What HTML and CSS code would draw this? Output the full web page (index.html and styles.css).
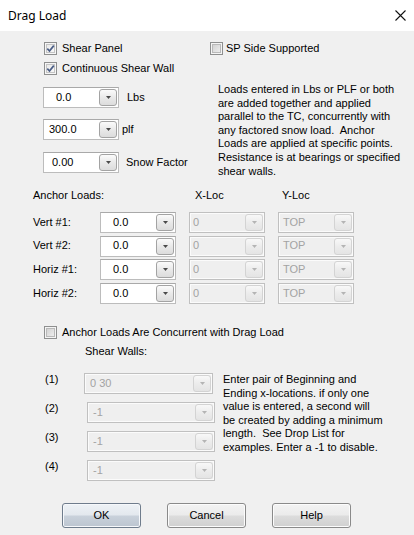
FILE: index.html
```html
<!DOCTYPE html>
<html>
<head>
<meta charset="utf-8">
<link rel="stylesheet" href="styles.css">
</head>
<body>
<div class="window">
  <div class="titlebar">
    <span class="title">Drag Load</span>
    <svg class="close" width="11" height="11" viewBox="0 0 11 11"><path d="M0.5 0.5 L10.5 10.5 M10.5 0.5 L0.5 10.5" stroke="#111" stroke-width="1.1" fill="none"/></svg>
  </div>

  <div class="top">
    <div class="top-left">
      <div class="check check--first"><span class="box box--on"><svg width="9" height="9" viewBox="0 0 9 9"><path d="M1.3 4.6 L3.5 7 L7.8 1.6" stroke="#4b5e86" stroke-width="1.7" fill="none"/></svg></span><span>Shear Panel</span></div>
      <div class="check check--second"><span class="box box--on"><svg width="9" height="9" viewBox="0 0 9 9"><path d="M1.3 4.6 L3.5 7 L7.8 1.6" stroke="#4b5e86" stroke-width="1.7" fill="none"/></svg></span><span>Continuous Shear Wall</span></div>

      <div class="field-row field-row--lbs">
        <div class="combo combo--w76"><span class="val pad-12">0.0</span><span class="drop"><svg width="5" height="3" viewBox="0 0 5 3"><path d="M0 0 H5 L2.5 3 Z" fill="#4a4a4a"/></svg></span></div>
        <span class="unit unit--lbs">Lbs</span>
      </div>
      <div class="field-row field-row--plf">
        <div class="combo combo--w76"><span class="val pad-5">300.0</span><span class="drop"><svg width="5" height="3" viewBox="0 0 5 3"><path d="M0 0 H5 L2.5 3 Z" fill="#4a4a4a"/></svg></span></div>
        <span class="unit unit--plf">plf</span>
      </div>
      <div class="field-row field-row--snow">
        <div class="combo combo--w76"><span class="val pad-8">0.00</span><span class="drop"><svg width="5" height="3" viewBox="0 0 5 3"><path d="M0 0 H5 L2.5 3 Z" fill="#4a4a4a"/></svg></span></div>
        <span class="unit unit--snow">Snow Factor</span>
      </div>
    </div>

    <div class="top-right">
      <div class="check check--sp"><span class="box box--off"></span><span>SP Side Supported</span></div>
      <p class="note note--top">Loads entered in Lbs or PLF or both<br>are added together and applied<br>parallel to the TC, concurrently with<br>any factored snow load.&nbsp; Anchor<br>Loads are applied at specific points.<br>Resistance is at bearings or specified<br>shear walls.</p>
    </div>
  </div>

  <div class="anchor">
    <div class="anchor-head">
      <span class="head-cell">Anchor Loads:</span>
      <span></span>
      <span class="head-cell head-x">X-Loc</span>
      <span class="head-cell head-y">Y-Loc</span>
    </div>
    <div class="anchor-grid">
      <span class="row-label">Vert #1:</span>
      <div class="combo"><span class="val pad-12">0.0</span><span class="drop"><svg width="5" height="3" viewBox="0 0 5 3"><path d="M0 0 H5 L2.5 3 Z" fill="#4a4a4a"/></svg></span></div>
      <div class="combo combo--off"><span class="val pad-3">0</span><span class="drop"><svg width="5" height="3" viewBox="0 0 5 3"><path d="M0 0 H5 L2.5 3 Z" fill="#b4b4b4"/></svg></span></div>
      <div class="combo combo--off"><span class="val pad-4">TOP</span><span class="drop"><svg width="5" height="3" viewBox="0 0 5 3"><path d="M0 0 H5 L2.5 3 Z" fill="#b4b4b4"/></svg></span></div>

      <span class="row-label">Vert #2:</span>
      <div class="combo"><span class="val pad-12">0.0</span><span class="drop"><svg width="5" height="3" viewBox="0 0 5 3"><path d="M0 0 H5 L2.5 3 Z" fill="#4a4a4a"/></svg></span></div>
      <div class="combo combo--off"><span class="val pad-3">0</span><span class="drop"><svg width="5" height="3" viewBox="0 0 5 3"><path d="M0 0 H5 L2.5 3 Z" fill="#b4b4b4"/></svg></span></div>
      <div class="combo combo--off"><span class="val pad-4">TOP</span><span class="drop"><svg width="5" height="3" viewBox="0 0 5 3"><path d="M0 0 H5 L2.5 3 Z" fill="#b4b4b4"/></svg></span></div>

      <span class="row-label">Horiz #1:</span>
      <div class="combo"><span class="val pad-12">0.0</span><span class="drop"><svg width="5" height="3" viewBox="0 0 5 3"><path d="M0 0 H5 L2.5 3 Z" fill="#4a4a4a"/></svg></span></div>
      <div class="combo combo--off"><span class="val pad-3">0</span><span class="drop"><svg width="5" height="3" viewBox="0 0 5 3"><path d="M0 0 H5 L2.5 3 Z" fill="#b4b4b4"/></svg></span></div>
      <div class="combo combo--off"><span class="val pad-4">TOP</span><span class="drop"><svg width="5" height="3" viewBox="0 0 5 3"><path d="M0 0 H5 L2.5 3 Z" fill="#b4b4b4"/></svg></span></div>

      <span class="row-label">Horiz #2:</span>
      <div class="combo"><span class="val pad-12">0.0</span><span class="drop"><svg width="5" height="3" viewBox="0 0 5 3"><path d="M0 0 H5 L2.5 3 Z" fill="#4a4a4a"/></svg></span></div>
      <div class="combo combo--off"><span class="val pad-3">0</span><span class="drop"><svg width="5" height="3" viewBox="0 0 5 3"><path d="M0 0 H5 L2.5 3 Z" fill="#b4b4b4"/></svg></span></div>
      <div class="combo combo--off"><span class="val pad-4">TOP</span><span class="drop"><svg width="5" height="3" viewBox="0 0 5 3"><path d="M0 0 H5 L2.5 3 Z" fill="#b4b4b4"/></svg></span></div>
    </div>
  </div>

  <div class="check concurrent"><span class="box box--off"></span><span>Anchor Loads Are Concurrent with Drag Load</span></div>
  <div class="sw-title">Shear Walls:</div>

  <div class="shear">
    <div class="shear-rows">
      <div class="sw-row">
        <span class="sw-label">(1)</span>
        <div class="combo combo--off combo--sw1"><span class="val pad-5">0 30</span><span class="drop"><svg width="5" height="3" viewBox="0 0 5 3"><path d="M0 0 H5 L2.5 3 Z" fill="#b4b4b4"/></svg></span></div>
      </div>
      <div class="sw-row">
        <span class="sw-label">(2)</span>
        <div class="combo combo--off combo--sw"><span class="val pad-5">-1</span><span class="drop"><svg width="5" height="3" viewBox="0 0 5 3"><path d="M0 0 H5 L2.5 3 Z" fill="#b4b4b4"/></svg></span></div>
      </div>
      <div class="sw-row">
        <span class="sw-label">(3)</span>
        <div class="combo combo--off combo--sw"><span class="val pad-5">-1</span><span class="drop"><svg width="5" height="3" viewBox="0 0 5 3"><path d="M0 0 H5 L2.5 3 Z" fill="#b4b4b4"/></svg></span></div>
      </div>
      <div class="sw-row">
        <span class="sw-label">(4)</span>
        <div class="combo combo--off combo--sw"><span class="val pad-5">-1</span><span class="drop"><svg width="5" height="3" viewBox="0 0 5 3"><path d="M0 0 H5 L2.5 3 Z" fill="#b4b4b4"/></svg></span></div>
      </div>
    </div>
    <p class="note note--bottom">Enter pair of Beginning and<br>Ending x-locations. if only one<br>value is entered, a second will<br>be created by adding a minimum<br>length.&nbsp; See Drop List for<br>examples. Enter a -1 to disable.</p>
  </div>

  <div class="buttons">
    <button class="push push--default">OK</button>
    <button class="push">Cancel</button>
    <button class="push">Help</button>
  </div>
</div>
</body>
</html>
```

FILE: styles.css
```css
html, body {
  margin: 0;
  padding: 0;
  background: #f0f0f0;
}
body {
  font-family: "Liberation Sans", Arial, sans-serif;
  font-size: 11px;
  line-height: 13.6px;
  color: #000;
}
.window {
  width: 414px;
  height: 535px;
  background: #f0f0f0;
  overflow: hidden;
}
.titlebar {
  height: 31px;
  background: #fff;
  display: flex;
  align-items: center;
  justify-content: space-between;
  padding: 0 8px;
  box-sizing: border-box;
}
.title {
  font-family: "Noto Sans", "Open Sans", sans-serif;
  font-size: 12px;
  color: #000;
}
.close { display: block; }

/* checkboxes */
.check {
  display: flex;
  align-items: center;
  gap: 5px;
  height: 13px;
  white-space: nowrap;
}
.box {
  width: 13px;
  height: 13px;
  box-sizing: border-box;
  border: 1px solid #8e8f8f;
  display: flex;
  align-items: center;
  justify-content: center;
  flex: none;
}
.box--on {
  background: linear-gradient(135deg, #e6e6e6, #fbfbfb);
  box-shadow: inset 0 0 0 1px #f6f6f6, inset 0 0 0 2px #c4c4c4;
}
.box--off {
  background: linear-gradient(135deg, #cbcbcb, #f4f4f4);
  box-shadow: inset 0 0 0 1px #f4f4f4, inset 0 0 0 2px #b9b9b9;
}
.box svg { display: block; }

/* top section */
.top {
  display: flex;
  height: 152px;
}
.top-left {
  width: 167px;
  padding-left: 43px;
}
.top-left .check { margin-left: 1px; }
.check--first { margin-top: 11px; }
.check--second { margin-top: 7px; }
.field-row {
  display: flex;
  align-items: center;
  height: 21px;
}
.field-row--lbs { margin-top: 12px; }
.field-row--plf { margin-top: 11px; }
.field-row--snow { margin-top: 12px; }
.unit { white-space: nowrap; }
.unit--lbs { margin-left: 8px; }
.unit--plf { margin-left: 3px; }
.unit--snow { margin-left: 7px; }

.check--sp {
  margin-top: 11px;
  gap: 3px;
}
.note {
  margin: 0;
  white-space: nowrap;
}
.note--top { margin: 28px 0 0 8px; }

/* combos */
.combo {
  box-sizing: border-box;
  height: 21px;
  background: #fff;
  border: 1px solid #bcbcbc;
  border-top-color: #a9a9a9;
  display: flex;
  align-items: center;
  padding-right: 1px;
}
.combo--w76 { width: 76px; }
.val {
  flex: 1;
  white-space: nowrap;
  overflow: hidden;
}
.pad-3 { padding-left: 3px; }
.pad-4 { padding-left: 4px; }
.pad-5 { padding-left: 5px; }
.pad-8 { padding-left: 8px; }
.pad-12 { padding-left: 12px; }
.drop {
  box-sizing: border-box;
  width: 18px;
  height: 17px;
  border: 1px solid #a3a3a3;
  border-radius: 3px;
  background: linear-gradient(#fbfbfb, #e9e9e9 50%, #dcdcdc);
  display: flex;
  align-items: center;
  justify-content: center;
  flex: none;
}
.drop svg { display: block; }
.combo--off {
  background: #efefef;
  border-color: #c0c0c0;
  box-shadow: inset 0 0 0 1px #fbfbfb;
  color: #a3a3a3;
}
.combo--off .drop {
  border-color: #d3d3d3;
  background: linear-gradient(#f8f8f8, #ececec 50%, #e4e4e4);
}

/* anchor section */
.anchor { padding-left: 33px; }
.anchor-head,
.anchor-grid {
  display: grid;
  grid-template-columns: 54px 76px 76px 76px;
  column-gap: 13px;
}
.anchor-head {
  margin-top: 6px;
  height: 14px;
  white-space: nowrap;
}
.head-x { padding-left: 6px; }
.head-y { padding-left: 4px; }
.anchor-grid {
  margin-top: 9px;
  grid-auto-rows: 21px;
  row-gap: 2.67px;
  align-items: center;
}
.row-label { white-space: nowrap; }

/* concurrent + shear walls */
.concurrent { margin: 22px 0 0 44px; }
.sw-title { margin: 6px 0 0 85px; }
.shear {
  display: flex;
  margin-top: 14.4px;
  padding-left: 45px;
}
.shear-rows {
  display: flex;
  flex-direction: column;
  gap: 8px;
}
.sw-row {
  display: flex;
  align-items: flex-start;
  height: 21px;
}
.sw-label { width: 39px; }
.combo--sw1 { width: 129px; }
.combo--sw {
  width: 128px;
  margin-left: 3px;
}
.note--bottom { margin-left: 8px; }

/* buttons */
.buttons {
  display: flex;
  gap: 26px;
  padding-left: 62px;
  margin-top: 22px;
}
.push {
  box-sizing: border-box;
  width: 79px;
  height: 25px;
  margin: 0;
  padding: 0;
  font-family: "Liberation Sans", Arial, sans-serif;
  font-size: 11px;
  color: #000;
  border: 1px solid #8a8a8a;
  border-radius: 3px;
  background: linear-gradient(#f3f3f3, #ebebeb 48%, #dcdcdc 52%, #d0d0d0);
  box-shadow: inset 0 0 0 1px #fcfcfc;
}
.push--default {
  border-color: #6f7c8c;
  background: linear-gradient(#eef2f6, #e3e8ee 48%, #c9d1db 52%, #bcc5d0);
  box-shadow: inset 0 0 0 1px #f6f8fb;
}
```
